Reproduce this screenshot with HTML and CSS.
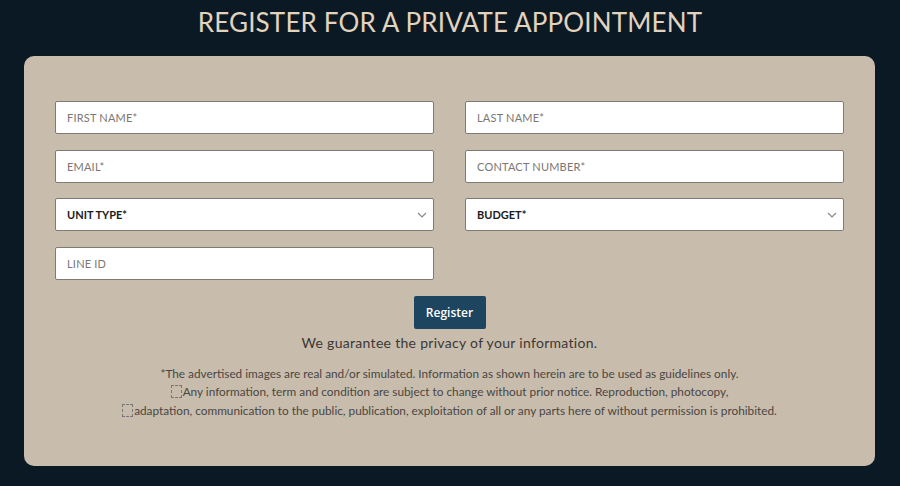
FILE: index.html
```html
<!DOCTYPE html>
<html lang="en">

<head>
    <meta charset="UTF-8">
    <meta name="viewport" content="width=device-width, initial-scale=1.0">
    <title>Register</title>
    <link rel="stylesheet" href="styles.css">
</head>

<body>
    <h1 class="title">REGISTER FOR A PRIVATE APPOINTMENT</h1>
    <div class="card">
        <form class="form-grid">
            <input class="field" type="text" placeholder="FIRST NAME*">
            <input class="field" type="text" placeholder="LAST NAME*">
            <input class="field" type="text" placeholder="EMAIL*">
            <input class="field" type="text" placeholder="CONTACT NUMBER*">
            <div class="select">
                <span>UNIT TYPE*</span>
                <svg width="10" height="6" viewBox="0 0 10 6"><path d="M1 1l4 4 4-4" fill="none" stroke="#888" stroke-width="1.2"/></svg>
            </div>
            <div class="select">
                <span>BUDGET*</span>
                <svg width="10" height="6" viewBox="0 0 10 6"><path d="M1 1l4 4 4-4" fill="none" stroke="#888" stroke-width="1.2"/></svg>
            </div>
            <input class="field" type="text" placeholder="LINE ID">
        </form>
        <div class="actions">
            <button class="btn" type="button">Register</button>
            <p class="guarantee">We guarantee the privacy of your information.</p>
        </div>
        <div class="disclaimer">
            <p>*The advertised images are real and/or simulated. Information as shown herein are to be used as guidelines only.</p>
            <p><span class="missing"></span>Any information, term and condition are subject to change without prior notice. Reproduction, photocopy,</p>
            <p><span class="missing"></span>adaptation, communication to the public, publication, exploitation of all or any parts here of without permission is prohibited.</p>
        </div>
    </div>
</body>

</html>
```

FILE: styles.css
```css
body {
    margin: 0;
    background-color: #0a1923;
    font-family: Lato, "Open Sans", sans-serif;
}

.title {
    margin: 0;
    padding-top: 7px;
    height: 49px;
    line-height: 30px;
    text-align: center;
    font-size: 26px;
    font-weight: 400;
    letter-spacing: 0.15px;
    color: #e2d3bf;
}

.card {
    margin: 0 25px 0 24px;
    height: 410px;
    box-sizing: border-box;
    padding: 45px 31px 0 31px;
    background-color: #c8bcac;
    border-radius: 10px;
}

.form-grid {
    display: grid;
    grid-template-columns: 1fr 1fr;
    column-gap: 31px;
    row-gap: 15.5px;
}

.field,
.select {
    height: 33px;
    box-sizing: border-box;
    border: 1px solid #7f7a74;
    border-radius: 2px;
    background: #fff;
    padding: 0 11px;
    font-family: Lato, sans-serif;
    font-size: 11px;
    outline: none;
}

.field::placeholder {
    color: #7a7774;
    letter-spacing: 0.2px;
}

.select {
    display: flex;
    align-items: center;
    justify-content: space-between;
    padding-right: 6px;
    color: #1c1c1c;
    font-weight: 700;
}

.actions {
    display: flex;
    flex-direction: column;
    align-items: center;
    margin-top: 16px;
}

.btn {
    width: 72px;
    height: 33px;
    border: none;
    border-radius: 2px;
    background-color: #1d4560;
    color: #fff;
    font-family: "Open Sans", sans-serif;
    font-size: 12px;
    font-weight: 600;
}

.guarantee {
    margin: 5px 0 0;
    font-size: 14px;
    color: #3b3835;
    letter-spacing: 0.3px;
}

.disclaimer {
    margin-top: 14px;
    text-align: center;
    font-size: 11.8px;
    color: #4a4642;
}

.disclaimer p {
    margin: 0;
    line-height: 18.5px;
}

.missing {
    display: inline-block;
    width: 9px;
    height: 11px;
    border: 1px dashed #777;
    vertical-align: -2px;
    margin-right: 1px;
}
```
